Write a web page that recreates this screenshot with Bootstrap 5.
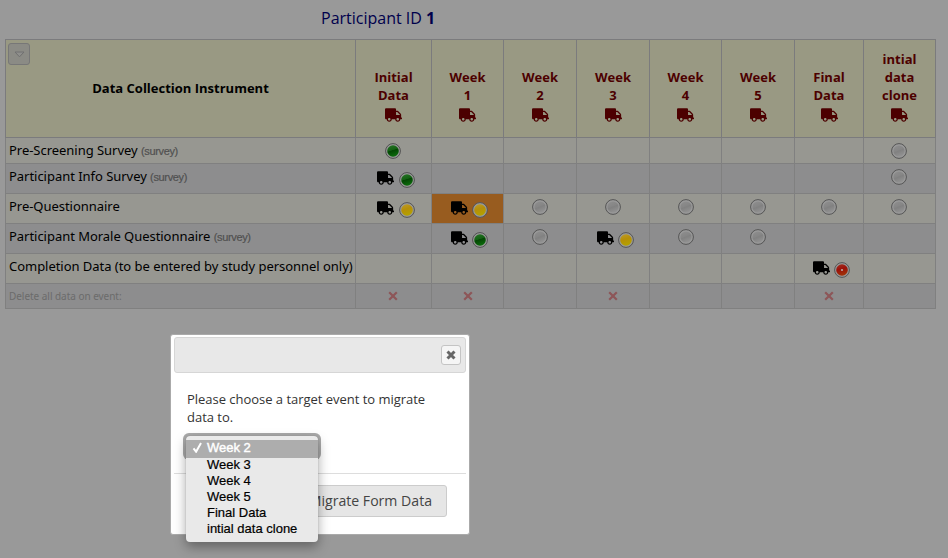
<!DOCTYPE html>
<html lang="en">
<head>
<meta charset="utf-8">
<title>Participant event grid</title>
<link href="https://cdn.jsdelivr.net/npm/bootstrap@5.3.0/dist/css/bootstrap.min.css" rel="stylesheet">
<style>
body{background:#999;font-family:"Noto Sans","Open Sans",sans-serif;font-size:13px;line-height:18px;height:558px;overflow:hidden;color:#000}
.page-head{height:39px;padding:7px 0 0 321px;font-family:"Open Sans",sans-serif;font-size:16px;line-height:22px;color:#00004c}
.event-grid{width:931px;margin-left:5px;table-layout:fixed;border-collapse:collapse}
.event-grid th,.event-grid td{border:1px solid #808080;padding:0}
.event-grid thead th{background:#999983;border-color:#7b7b7d;height:98px;text-align:center;vertical-align:bottom;padding-bottom:15px;font-family:"Open Sans",sans-serif;font-weight:700;color:#4c0000}
.event-grid thead th:first-child{color:#000;vertical-align:middle;padding-bottom:2px}
.event-grid td{vertical-align:top;text-align:center;line-height:0;padding-top:5px}
.event-grid td:first-child{text-align:left;line-height:18px;padding:3px 0 0 3px;white-space:nowrap;letter-spacing:-.035px}
.event-grid td:nth-child(2),.event-grid td:nth-child(9){padding-right:1px}
.event-grid tbody tr{height:30px;background:#8d8d8e}
.event-grid tbody tr.odd-line{background:#979791}
.event-grid tbody tr.first-line{height:26px}
.event-grid tbody tr.last-line{height:25px}
.event-grid tbody tr.last-line td{padding-top:7px}
.event-grid tbody tr.last-line td:first-child{padding-top:3px;font-size:10px;color:#6b6b6b}
.event-grid td.chosen{background:#985c1f}
.survey-tag{font-family:"Liberation Sans",Arial,sans-serif;font-size:11px;letter-spacing:-.35px;color:#505050;-webkit-text-stroke:.2px}
.truck{width:17px;height:14px;fill:currentColor}
.ball{width:16px;height:16px}
.cross{width:10px;height:10px}
.pair{display:inline-flex;align-items:flex-start;gap:5px;padding-left:6px;padding-top:2px}
.pair .ball{margin-top:1px}
.tight{gap:4px;padding-left:4px}
thead .truck{display:block;margin:4px auto 0}
.menu-btn{left:2px;top:3px;width:22px;height:22px;border:1px solid #777;border-radius:3px;background:#8b8b85}
.dlg{left:170px;top:334px;width:300px;height:201px;background:#fff;border:1px solid #aaa;border-radius:3px;padding:2px 3px}
.dlg-bar{height:36px;background:#e8e8e8;border:1px solid #d6d6d6;border-radius:3px;padding-right:4px}
.dlg-close{width:20px;height:20px;background:#f5f5f5;border:1px solid #c4c4c4;border-radius:3px}
.dlg-text{font-family:"Open Sans",sans-serif;height:101px;padding:17px 13px 0;color:#333;border-bottom:1px solid #ddd;letter-spacing:-.025px}
.dlg-action{height:32px;margin:11px 19px 0 0;padding:0 14px;background:#e6e6e6;border:1px solid #ccc;border-radius:3px;font-family:"Open Sans",sans-serif;font-size:14.1px;line-height:28px;color:#444}
.select-ring{left:183px;top:433px;width:138px;height:27px;border-radius:6px;background:#a9a9a9}
.choice-menu{left:186px;top:436px;width:132px;height:106px;padding-top:4px;background:#e9e9e9;border-radius:4px;box-shadow:0 0 1px #777,0 5px 12px rgba(0,0,0,.35);font-family:"Liberation Sans",Arial,sans-serif;font-size:13px;line-height:16px;color:#000;overflow:hidden}
.choice-menu div{height:16px;padding-left:21px;-webkit-text-stroke:.2px}
.choice-menu div.picked{height:18px;line-height:16px;background:#adadad;color:#fff;padding-left:6px;margin-bottom:-1px;-webkit-text-stroke:.4px}
.choice-menu .tick{width:11px;height:11px;margin-right:4px;vertical-align:-1px}
</style>
<script src="https://cdn.jsdelivr.net/npm/bootstrap@5.3.0/dist/js/bootstrap.bundle.min.js"></script>
</head>
<body>
<svg width="0" height="0" class="position-absolute">
<defs>
<linearGradient id="gGreen" x1="0" y1="0" x2=".3" y2="1"><stop offset="0" stop-color="#287528"/><stop offset=".5" stop-color="#126012"/><stop offset=".55" stop-color="#034703"/><stop offset="1" stop-color="#0b680b"/></linearGradient>
<linearGradient id="gYellow" x1="0" y1="0" x2=".3" y2="1"><stop offset="0" stop-color="#bd9c2c"/><stop offset=".5" stop-color="#b68f08"/><stop offset="1" stop-color="#b4a000"/></linearGradient>
<linearGradient id="gGray" x1="0" y1="0" x2=".4" y2="1"><stop offset="0" stop-color="#8f8f8f"/><stop offset=".5" stop-color="#868686"/><stop offset=".6" stop-color="#818181"/><stop offset="1" stop-color="#909090"/></linearGradient>
<linearGradient id="gRed" x1="0" y1="0" x2=".3" y2="1"><stop offset="0" stop-color="#a43222"/><stop offset=".5" stop-color="#9b1009"/><stop offset="1" stop-color="#a03208"/></linearGradient>
</defs>
<symbol id="truck" viewBox="0 0 640 512"><path d="M624 352h-16V243.900c0-12.700-5.100-24.900-14.100-33.900L494 110.100c-9-9-21.200-14.100-33.900-14.100H416V48c0-26.500-21.500-48-48-48H48C21.500 0 0 21.500 0 48v320c0 26.500 21.500 48 48 48h16c0 53 43 96 96 96s96-43 96-96h128c0 53 43 96 96 96s96-43 96-96h48c8.800 0 16-7.200 16-16v-32c0-8.800-7.200-16-16-16zM160 464c-26.500 0-48-21.500-48-48s21.500-48 48-48 48 21.500 48 48-21.500 48-48 48zm320 0c-26.500 0-48-21.500-48-48s21.500-48 48-48 48 21.500 48 48-21.500 48-48 48zm80-208H416V144h44.100l99.900 99.900V256z"/></symbol>
<symbol id="green" viewBox="0 0 16 16"><circle cx="8" cy="8" r="7.400" fill="#999" stroke="#505050"/><circle cx="8" cy="8" r="5.8" fill="url(#gGreen)"/></symbol>
<symbol id="yellow" viewBox="0 0 16 16"><circle cx="8" cy="8" r="7.400" fill="#999" stroke="#555"/><circle cx="8" cy="8" r="5.8" fill="url(#gYellow)"/></symbol>
<symbol id="gray" viewBox="0 0 16 16"><circle cx="8" cy="8" r="7.400" fill="#999" stroke="#555"/><circle cx="8" cy="8" r="5.6" fill="url(#gGray)"/></symbol>
<symbol id="red" viewBox="0 0 16 16"><circle cx="8" cy="8" r="7.400" fill="#999" stroke="#555"/><circle cx="8" cy="8" r="5.8" fill="url(#gRed)"/><circle cx="8" cy="8" r="1.1" fill="#b9aaa6"/></symbol>
<symbol id="cross" viewBox="0 0 10 10"><path d="M1.200 1.200l7.600 7.600M8.800 1.200L1.200 8.800" stroke="#8d5658" stroke-width="2.200" fill="none"/></symbol>
</svg>

<header class="page-head">Participant ID <b>1</b></header>

<table class="event-grid">
<colgroup><col style="width:350px"><col style="width:76px"><col style="width:72px"><col style="width:73px"><col style="width:73px"><col style="width:72px"><col style="width:73px"><col style="width:69px"><col style="width:72px"></colgroup>
<thead>
<tr>
<th class="position-relative"><span class="menu-btn position-absolute d-flex align-items-center justify-content-center"><svg width="11" height="7" viewBox="0 0 11 7"><path d="M1 1h9L5.500 5.800z" fill="#8f8f8c" stroke="#707070"/></svg></span>Data Collection Instrument</th>
<th>Initial<br>Data<svg class="truck"><use href="#truck"/></svg></th>
<th>Week<br>1<svg class="truck"><use href="#truck"/></svg></th>
<th>Week<br>2<svg class="truck"><use href="#truck"/></svg></th>
<th>Week<br>3<svg class="truck"><use href="#truck"/></svg></th>
<th>Week<br>4<svg class="truck"><use href="#truck"/></svg></th>
<th>Week<br>5<svg class="truck"><use href="#truck"/></svg></th>
<th>Final<br>Data<svg class="truck"><use href="#truck"/></svg></th>
<th>intial<br>data<br>clone<svg class="truck"><use href="#truck"/></svg></th>
</tr>
</thead>
<tbody>
<tr class="odd-line first-line"><td>Pre-Screening Survey <span class="survey-tag">(survey)</span></td><td><svg class="ball"><use href="#green"/></svg></td><td></td><td></td><td></td><td></td><td></td><td></td><td><svg class="ball"><use href="#gray"/></svg></td></tr>
<tr><td>Participant Info Survey <span class="survey-tag">(survey)</span></td><td><span class="pair"><svg class="truck"><use href="#truck"/></svg><svg class="ball"><use href="#green"/></svg></span></td><td></td><td></td><td></td><td></td><td></td><td></td><td><svg class="ball"><use href="#gray"/></svg></td></tr>
<tr class="odd-line"><td>Pre-Questionnaire</td><td><span class="pair"><svg class="truck"><use href="#truck"/></svg><svg class="ball"><use href="#yellow"/></svg></span></td><td class="chosen"><span class="pair tight"><svg class="truck"><use href="#truck"/></svg><svg class="ball"><use href="#yellow"/></svg></span></td><td><svg class="ball"><use href="#gray"/></svg></td><td><svg class="ball"><use href="#gray"/></svg></td><td><svg class="ball"><use href="#gray"/></svg></td><td><svg class="ball"><use href="#gray"/></svg></td><td><svg class="ball"><use href="#gray"/></svg></td><td><svg class="ball"><use href="#gray"/></svg></td></tr>
<tr><td>Participant Morale Questionnaire <span class="survey-tag">(survey)</span></td><td></td><td><span class="pair tight"><svg class="truck"><use href="#truck"/></svg><svg class="ball"><use href="#green"/></svg></span></td><td><svg class="ball"><use href="#gray"/></svg></td><td><span class="pair tight"><svg class="truck"><use href="#truck"/></svg><svg class="ball"><use href="#yellow"/></svg></span></td><td><svg class="ball"><use href="#gray"/></svg></td><td><svg class="ball"><use href="#gray"/></svg></td><td></td><td></td></tr>
<tr class="odd-line"><td>Completion Data (to be entered by study personnel only)</td><td></td><td></td><td></td><td></td><td></td><td></td><td><span class="pair tight"><svg class="truck"><use href="#truck"/></svg><svg class="ball"><use href="#red"/></svg></span></td><td></td></tr>
<tr class="last-line"><td>Delete all data on event:</td><td><svg class="cross"><use href="#cross"/></svg></td><td><svg class="cross"><use href="#cross"/></svg></td><td></td><td><svg class="cross"><use href="#cross"/></svg></td><td></td><td></td><td><svg class="cross"><use href="#cross"/></svg></td><td></td></tr>
</tbody>
</table>

<div class="dlg position-absolute" role="dialog">
<div class="dlg-bar d-flex align-items-center justify-content-end"><button type="button" class="dlg-close p-0 d-flex align-items-center justify-content-center" aria-label="Close"><svg width="10" height="10" viewBox="0 0 10 10"><path d="M1.500 1.500l7 7M8.500 1.500l-7 7" stroke="#666" stroke-width="3"/></svg></button></div>
<div class="dlg-text">Please choose a target event to migrate<br>data to.</div>
<div class="d-flex justify-content-end"><button type="button" class="dlg-action">Migrate Form Data</button></div>
</div>
<div class="select-ring position-absolute"></div>
<div class="choice-menu position-absolute">
<div class="picked"><svg class="tick" viewBox="0 0 11 11"><path d="M1.500 6.300l2.600 3.400L9 1" fill="none" stroke="#fff" stroke-width="2"/></svg>Week 2</div>
<div>Week 3</div><div>Week 4</div><div>Week 5</div><div>Final Data</div><div>intial data clone</div>
</div>
</body>
</html>
